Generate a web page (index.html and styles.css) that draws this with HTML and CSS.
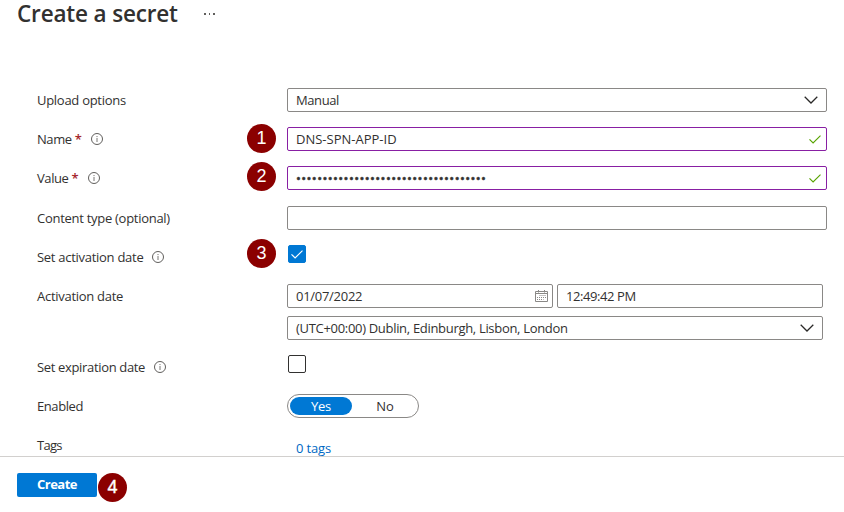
FILE: index.html
```html
<!DOCTYPE html>
<html lang="en">
<head>
<meta charset="utf-8">
<title>Create a secret</title>
<link rel="stylesheet" href="styles.css">
</head>
<body>
<svg class="defs" width="0" height="0" aria-hidden="true">
  <symbol id="info" viewBox="0 0 12 12"><circle cx="6" cy="6" r="5.5" fill="none" stroke="#605e5c"/><path d="M6 5v4M6 3v1.1" stroke="#797775" fill="none"/></symbol>
  <symbol id="chevron" viewBox="0 0 14 8"><path d="M.7.8 7 7 13.300.8" fill="none" stroke="#292827" stroke-width="1.250"/></symbol>
  <symbol id="check" viewBox="0 0 12 9"><path d="M.5 4.300 4.100 7.900 11.500.6" fill="none" stroke="currentColor" stroke-width="1.150"/></symbol>
</svg>
<header class="header">
  <h1 class="title">Create a secret</h1>
  <span class="more"><i></i><i></i><i></i></span>
</header>
<main class="form">
  <div class="row">
    <label class="label"><span>Upload options</span></label>
    <div class="input"><span class="tight">Manual</span><svg class="chevron"><use href="#chevron"/></svg></div>
  </div>
  <div class="row">
    <label class="label required"><span class="tight">Name <b>*</b></span><svg class="info"><use href="#info"/></svg></label>
    <span class="badge">1</span>
    <div class="input valid"><span class="plain">DNS-SPN-APP-ID</span><svg class="check"><use href="#check"/></svg></div>
  </div>
  <div class="row tall">
    <label class="label required"><span class="tight">Value <b>*</b></span><svg class="info"><use href="#info"/></svg></label>
    <span class="badge raised">2</span>
    <div class="input valid"><span class="secret">••••••••••••••••••••••••••••••••••••</span><svg class="check"><use href="#check"/></svg></div>
  </div>
  <div class="row">
    <label class="label"><span>Content type (optional)</span></label>
    <div class="input"></div>
  </div>
  <div class="row">
    <label class="label"><span>Set activation date</span><svg class="info"><use href="#info"/></svg></label>
    <span class="badge high">3</span>
    <div class="box checked"><svg class="check"><use href="#check"/></svg></div>
  </div>
  <div class="row">
    <label class="label"><span>Activation date</span></label>
    <div class="dates">
      <div class="input"><span>01/07/2022</span>
        <svg class="calendar" viewBox="0 0 13 12" fill="none" stroke="#8a8886"><path d="M.5 1.500h12v10H.5zM.5 3.500h12M3.500 0v2.500M9.500 0v2.500"/><path d="M4.500 5.500H11M2 7.500h9M2 9.500h6.500" stroke-dasharray="1 1"/></svg>
      </div>
      <div class="input"><span class="tight">12:49:42 PM</span></div>
      <div class="input zone"><span class="zone-name">(UTC+00:00) Dublin, Edinburgh, Lisbon, London</span><svg class="chevron"><use href="#chevron"/></svg></div>
    </div>
  </div>
  <div class="row">
    <label class="label"><span class="snug">Set expiration date</span><svg class="info"><use href="#info"/></svg></label>
    <div class="box"></div>
  </div>
  <div class="row">
    <label class="label"><span class="tight">Enabled</span></label>
    <div class="toggle"><span class="on">Yes</span><span class="off">No</span></div>
  </div>
  <div class="row">
    <label class="label"><span class="tags">Tags</span></label>
    <a class="link">0 tags</a>
  </div>
</main>
<footer class="footer">
  <button class="create">Create</button>
  <span class="badge end">4</span>
</footer>
</body>
</html>
```
FILE: styles.css
```css
* { box-sizing: border-box; }
body {
  margin: 0;
  width: 844px;
  height: 512px;
  overflow: hidden;
  background: #fff;
  color: #323130;
  font: 13px/22px "Open Sans", "Noto Sans", sans-serif;
  letter-spacing: -.28px;
  white-space: nowrap;
}
.defs { position: absolute; }
.header { display: flex; height: 88px; padding-left: 17px; }
.title { margin: 0; width: 187px; font-size: 22.500px; font-weight: 600; line-height: 28px; letter-spacing: -.16px; }
.more { display: flex; gap: 3px; padding-top: 13px; }
.more i { width: 1.500px; height: 1.500px; background: #605e5c; }

.form { height: 368px; padding-left: 37px; overflow: hidden; }
.row { position: relative; display: grid; grid-template-columns: 250px 540px; margin-bottom: 15px; min-height: 24px; }
.row.tall { margin-bottom: 16px; }
.label { display: flex; align-items: center; height: 24px; gap: 9px; }
.label.required { gap: 10px; }
.label b { color: #a4262c; font-weight: 600; }
.info { width: 12px; height: 12px; }

.tight { letter-spacing: -.42px; }
.snug { letter-spacing: -.34px; }
.tags { letter-spacing: -.7px; }
.plain { letter-spacing: 0; }
.zone-name { letter-spacing: -.31px; }
.secret { letter-spacing: .4px; -webkit-text-stroke: .5px #323130; }

.input { display: flex; align-items: center; justify-content: space-between; height: 24px; padding: 0 8px; border: 1px solid #8a8886; border-radius: 2px; }
.input.valid { border-color: #881fa3; padding-right: 5px; }
.chevron { width: 14px; height: 8px; }
.check { width: 12px; height: 9px; color: #57a300; }
.calendar { width: 13px; height: 12px; margin-right: -4px; }
.dates { display: grid; grid-template-columns: 266px 266px; gap: 8px 4px; }
.zone { grid-column: span 2; }

.box { width: 18px; height: 18px; margin-left: 1px; border: 1px solid #323130; border-radius: 2px; }
.box.checked { display: grid; place-items: center; background: #0078d4; border-color: #0078d4; }
.checked .check { color: #fff; }

.toggle { display: flex; width: 132px; height: 24px; padding: 2px; border: 1px solid #8a8886; border-radius: 12px; line-height: 18px; text-align: center; }
.on { width: 62px; height: 18px; border-radius: 9px; background: #0078d4; color: #fff; }
.off { flex: 1; padding-left: 2px; letter-spacing: 0; }
.link { padding: 4px 0 0 9px; color: #0069c4; letter-spacing: -.15px; }

.badge { position: absolute; left: 210px; top: -3px; width: 29px; height: 29px; border-radius: 50%; background: #8b0000; color: #fff; font: 18px/29px "Liberation Sans", sans-serif; letter-spacing: 0; text-align: center; }
.badge.raised { top: -4px; }
.badge.high { top: -6px; }
.badge.end { left: 98px; top: 16px; -webkit-text-stroke: .4px #fff; }

.footer { position: relative; height: 56px; padding: 16px 17px; border-top: 1px solid #d2d0ce; }
.create { display: block; width: 80px; height: 24px; padding: 0 0 2px; border: 0; border-radius: 2px; background: #0078d4; color: #fff; font: 700 13px/22px "Open Sans", sans-serif; letter-spacing: -.5px; }
```
